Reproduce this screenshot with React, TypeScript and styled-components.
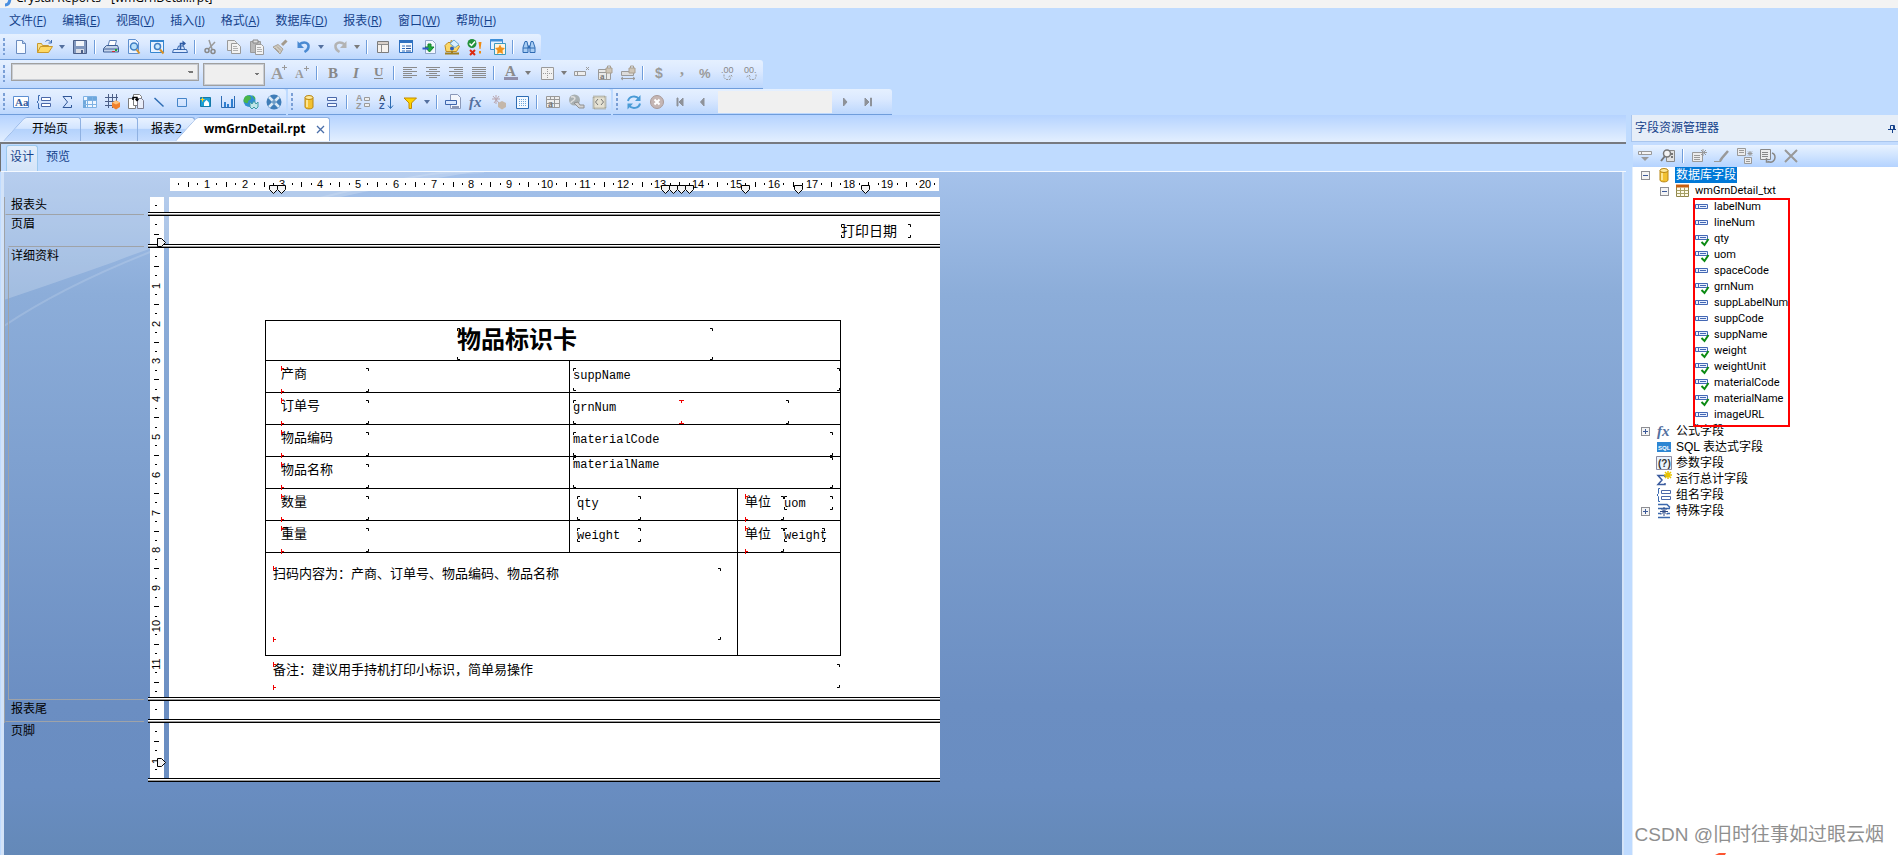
import React from 'react';
import styled, { createGlobalStyle, css } from 'styled-components';

const UI = '"Open Sans", "Noto Sans CJK SC", sans-serif';
const SONG = '"Liberation Sans", "Noto Sans CJK SC", sans-serif';
const MONO = '"Liberation Mono", "Noto Sans CJK SC", monospace';

const Global = createGlobalStyle`
  * { box-sizing: border-box; }
  body { margin: 0; background: #bfdbff; font: 12px/16px ${UI}; color: #000; overflow: hidden; }
  button { border: 0; padding: 0; background: none; font: inherit; color: inherit; }
  ul { list-style: none; margin: 0; padding: 0; }
  svg { display: block; overflow: visible; }
`;

/* ---------- icons ---------- */

const B = '#3b6ab0';
const G = '#9a9a9a';

const lines = (rows: number[][], color: string) =>
  rows.map(([x, y, w], i) => <path key={i} d={`M${x} ${y}.5h${w}`} stroke={color} />);

const icons: Record<string, React.ReactNode> = {
  new: (<><path d="M3.5 1.5h6l3 3v10h-9z" fill="#f6faff" stroke="#6b8cc0" /><path d="M9.5 1.5v3h3" fill="#bcd2f0" stroke="#6b8cc0" /></>),
  open: (<><path d="M0.5 13.5v-9h4l1 2h6v2" fill="#f9e08a" stroke="#c9992c" /><path d="M0.5 13.5l3-6h12l-4 6z" fill="#ffd964" stroke="#c9992c" /><path d="M8.5 2.500c2-2 4-1.500 5.500 1M14.500 1v3h-3" fill="none" stroke={B} /></>),
  save: (<><path d="M1.500 1.500h13v13h-13z" fill="#8198bf" stroke="#4b5f88" /><path d="M4 2h8v5H4z" fill="#f2f5fa" /><path d="M4 10h8v4H4z" fill="#d9dde6" /><path d="M9 11h2v3H9z" fill="#4b5f88" /></>),
  print: (<><path d="M5 7l1.500-5.500h7L12 7z" fill="#fff" stroke="#5d7fb5" /><path d="M.5 9.500l3-3h11l1 2.500v4h-15z" fill="#c3d3ea" stroke="#3f5f95" /><path d="M1 10h14" stroke="#3f5f95" /><path d="M12 10h2v2h-2z" fill="#1faa2c" /><path d="M9 12.500h3" stroke="#d03030" /></>),
  preview: (<><path d="M2.500.500h7l3 3v11h-10z" fill="#eaf3ff" stroke="#5f90cf" /><circle cx="8" cy="7.500" r="3.500" fill="#b8e0fb" stroke="#3f7fc4" strokeWidth="1.500" /><path d="M10.500 10.500l3 4" stroke="#d7922a" strokeWidth="2" /></>),
  previewWin: (<><path d="M1.500 1.500h13v12h-13z" fill="#eaf3ff" stroke="#3586d0" /><path d="M1 2h14" stroke="#3586d0" strokeWidth="2" /><circle cx="8.500" cy="7.500" r="3" fill="#c9e8fd" stroke="#3f7fc4" strokeWidth="1.500" /><path d="M11 10.500l3.500 4" stroke="#d7922a" strokeWidth="2" /></>),
  export: (<><path d="M1.500 10.500h13l1 3h-15z" fill="#dceaff" stroke={B} /><path d="M8.500 11V4.500h4" fill="none" stroke="#2f5ca5" strokeWidth="1.500" /><path d="M10.500 1.500l3.500 3-3.500 3z" fill="#2f5ca5" /><path d="M5.500 10l1-3h5l1 3" fill="none" stroke={B} /></>),
  cut: (<><path d="M6 1l3 9M12 3L5.500 10" stroke={G} strokeWidth="1.500" /><circle cx="4" cy="11.500" r="2" fill="none" stroke="#888" strokeWidth="1.500" /><circle cx="10" cy="12.500" r="2" fill="none" stroke="#888" strokeWidth="1.500" /></>),
  copy: (<><path d="M1.500 1.500h7l2 2v8h-9z" fill="#ececec" stroke={G} /><path d="M5.500 4.500h6l3 3v7h-9z" fill="#f3f3f3" stroke={G} />{lines([[7, 7, 4], [7, 9, 5], [7, 11, 5]], '#b0b0b0')}</>),
  paste: (<><path d="M1.500 2.500h10v11h-10z" fill="#b9b9b9" stroke={G} /><path d="M4 1h5v3H4z" fill="#ddd" stroke="#888" /><path d="M6.500 5.500h6l2 2v8h-8z" fill="#f3f3f3" stroke={G} />{lines([[8, 8, 4], [8, 10, 5], [8, 12, 5]], '#b0b0b0')}</>),
  brush: (<><path d="M14.500 1.500L10 6" stroke="#a49a8c" strokeWidth="3" /><path d="M6 5.500l5 4.500-3 5-7-7z" fill="#cfcac0" stroke="#a9a297" /><path d="M3 9l4 4M5 7.500l4 4" stroke="#a9a297" /></>),
  undo: (<><path d="M3 5.500c6-4 10-1 9.500 2.500-.3 2.300-2 3.800-4 5" fill="none" stroke="#4a8ad2" strokeWidth="2.500" /><path d="M1.500 2v7H8z" fill="#4a8ad2" /></>),
  redo: (<><path d="M13 5.500C7 1.500 3 4.500 3.500 8c.3 2.300 2 3.800 4 5" fill="none" stroke="#b3b3b3" strokeWidth="2.500" /><path d="M14.500 2v7H8z" fill="#b3b3b3" /></>),
  sheet: (<><path d="M2.500 2.500h11v11h-11z" fill="#f6f2ee" stroke="#7c7c7c" /><path d="M2.500 5.500h11M6.500 5.500v8" stroke="#8c8c8c" /><path d="M3 3h10v2H3z" fill="#d8cfc8" /></>),
  form: (<><path d="M1.500 1.500h13v12h-13z" fill="#f4f9ff" stroke="#2e70c0" /><path d="M1 2.500h14" stroke="#2e70c0" strokeWidth="3" /><path d="M4 7h3M4 9.500h3M4 12h3" stroke="#2e70c0" /><path d="M8 7h5M8 9.500h5M8 12h5" stroke="#244f94" /></>),
  publish: (<><path d="M4.500 1.500h7l3 3v10h-10z" fill="#f2f7ff" stroke="#8fa5c8" /><path d="M7 5h3v3h3l-4.500 5L4 8h3z" fill="#1fae3c" stroke="#15802b" /><path d="M1.500 9.500h6" stroke="#3359c7" strokeWidth="2" /></>),
  explorer: (<><path d="M1 6.500l3-3h3v-2l6 3 2.500 3-3 5H2z" fill="#fbd768" stroke="#bd8a22" /><path d="M6 4.500l4-3.500 5 4.500-4 3z" fill="#d9effe" stroke="#69a8d6" /><circle cx="8" cy="9.500" r="2" fill="#2b5fb8" /><path d="M1 14.500h14M8 12v3" stroke="#a08020" strokeWidth="2" /></>),
  check: (<><circle cx="5" cy="4.500" r="4.500" fill="#23913a" /><path d="M2.500 4.500l2 2 3.500-4" fill="none" stroke="#fff" strokeWidth="1.500" /><path d="M3 11l5 5M8 11l-5 5" stroke="#dc2a10" strokeWidth="2" /><path d="M11.500 3h3l-1 7h-1zM12 12h2v2.500h-2z" fill="#f08b12" /></>),
  star: (<><path d="M.5.500h12v10H.5z" fill="#e6f2ff" stroke="#3f8fd8" /><path d="M0 1.500h13" stroke="#3f8fd8" strokeWidth="2" /><path d="M4.500 4.500h11v11h-11z" fill="#fff4df" stroke="#3d9ac0" /><path d="M10 5.500l1.500 3 3.500.5-2.500 2.500.5 3.500-3-1.500L7 15l.5-3.500L5 9l3.500-.5z" fill="#f0921a" /></>),
  find: (<><path d="M2 13.500v-5l2-6h2l1 5v6zM9 13.500v-6l1-5h2l2 6v5z" fill="#a9cdf3" stroke="#2f6bb3" /><path d="M7 6.500h2v3H7z" fill="#2f6bb3" /><path d="M2 9h5M9 9h5" stroke="#2f6bb3" /></>),
  grow: (<><text x="0" y="14" fontFamily="Liberation Serif" fontWeight="700" fontSize="17" fill={G}>A</text><path d="M13.500 0v5M11 2.500h5" stroke={G} /></>),
  shrink: (<><text x="1" y="13" fontFamily="Liberation Serif" fontWeight="700" fontSize="12" fill={G}>A</text><path d="M12.500 1v5M10 3.500h5" stroke={G} /></>),
  bold: <text x="3" y="13" fontFamily="Liberation Serif" fontWeight="700" fontSize="15" fill="#888">B</text>,
  italic: <text x="5" y="13" fontFamily="Liberation Serif" fontWeight="700" fontStyle="italic" fontSize="15" fill="#888">I</text>,
  underline: (<><text x="3" y="11" fontFamily="Liberation Serif" fontWeight="700" fontSize="13" fill="#888">U</text><path d="M3 13.500h9" stroke="#888" /></>),
  left: lines([[1, 2, 14], [1, 4, 9], [1, 6, 14], [1, 8, 9], [1, 10, 14], [1, 12, 9]], '#8b8b8b'),
  center: lines([[1, 2, 14], [4, 4, 8], [1, 6, 14], [4, 8, 8], [1, 10, 14], [4, 12, 8]], '#8b8b8b'),
  right: lines([[1, 2, 14], [6, 4, 9], [1, 6, 14], [6, 8, 9], [1, 10, 14], [6, 12, 9]], '#8b8b8b'),
  justify: lines([[1, 2, 14], [1, 4, 14], [1, 6, 14], [1, 8, 14], [1, 10, 14], [1, 12, 14]], '#8b8b8b'),
  color: (<><text x="2" y="11" fontFamily="Liberation Serif" fontWeight="700" fontSize="15" fill="#8b8b8b">A</text><path d="M1 13.500h14" stroke="#9090ac" strokeWidth="3" /></>),
  border: (<><path d="M2.500 2.500h12v12h-12z" fill="#f1f1f1" stroke={G} /><path d="M8.500 4v10M4 8.500h10" stroke={G} strokeDasharray="1 1" /></>),
  suppress: (<><path d="M.5 6.500h11v4H.5zM3.500 6.500v4" fill="#ededed" stroke={G} /><path d="M12 2l3 3M15 2l-3 3" stroke={G} /></>),
  lockTable: (<><path d="M1.500 4.500h12v10h-12zM1.500 7.500h12M9.500 7v7" fill="#e8e8e8" stroke={G} /><text x="3" y="14" fontFamily="Liberation Serif" fontWeight="700" fontSize="9" fill="#777">a</text><path d="M9 3h6v5H9z" fill="#cfc6b8" stroke="#a99f90" /><path d="M10.500 3V1h3v2" fill="none" stroke="#a99f90" /></>),
  lockSize: (<><path d="M1.500 6.500h12v4h-12z" fill="#dcdcdc" stroke={G} /><path d="M1 13.500h14M3 12l-2 1.500L3 15M13 12l2 1.500-2 1.500" fill="none" stroke={G} /><path d="M9 3h6v5H9z" fill="#cfc6b8" stroke="#a99f90" /><path d="M10.500 3V1h3v2" fill="none" stroke="#a99f90" /></>),
  dollar: <text x="4" y="13" fontFamily="Liberation Sans" fontWeight="700" fontSize="14" fill={G}>$</text>,
  comma: <text x="6" y="10" fontFamily="Liberation Serif" fontWeight="700" fontSize="16" fill={G}>,</text>,
  percent: <text x="2" y="13" fontFamily="Liberation Sans" fontWeight="700" fontSize="13" fill={G}>%</text>,
  decAdd: (<><text x="1" y="8" fontFamily="Liberation Sans" fontSize="9" fill="#888">.00</text><path d="M4 9.500v3l2 2h4l1-3M8.500 12l2.500-2 2 2" fill="none" stroke={G} strokeDasharray="2 1" /></>),
  decSub: (<><text x="1" y="8" fontFamily="Liberation Sans" fontSize="9" fill="#888">00.</text><path d="M13 9.500v3l-2 2H7l-1-3M3.500 12l2.500-2 2 2" fill="none" stroke={G} strokeDasharray="2 1" /></>),
  text: (<><path d="M.5 2.500h15v11H.5z" fill="#fff" stroke="#5d8fd2" /><text x="2" y="12" fontFamily="Liberation Serif" fontWeight="700" fontSize="11" fill="#345b9c">Aa</text></>),
  group: (<><path d="M4 1.500H2.500v5L1 8l1.500 1.500v5H4" fill="none" stroke={B} /><path d="M5.500 3.500h9v3h-9zM5.500 9.500h9v3h-9z" fill="#fff" stroke="#4b68a8" /></>),
  sigma: <path d="M12.500 5V2.500H4l4.500 5.500L4 13.500h8.500V11" fill="none" stroke="#2f5596" />,
  cross: (<><path d="M1.500 2.500h13v11h-13z" fill="#eef6ff" stroke="#7fb2e4" /><path d="M5 3h10v3H5zM1 6h3v8H1z" fill="#6fa8dc" /><path d="M1.500 6.500h13M1.500 10.500h13M5.500 2.500v11M10.500 2.500v11" stroke="#7fb2e4" /></>),
  cube: (<><path d="M0 3.500h13M0 7.500h13M0 11.500h7M3.500 0v14M7.500 0v14M11.500 0v7" stroke="#4b5e86" /><path d="M11 6.500l4 2v4.500l-4 2.500-4-2.500V8.500z" fill="#f0802a" /><path d="M11 6.500l4 2-4 2-4-2z" fill="#ffc37a" /></>),
  subreport: (<><path d="M.5 4.500h7v10h-7z" fill="#fff" stroke="#7d7d7d" /><path d="M5.500.500h6l2 2v9h-8z" fill="#fff" stroke="#7d7d7d" /><path d="M9.500 4.500h4l2 2v8h-6z" fill="#e9eef9" stroke="#7c7c8e" /><path d="M5 6V3.500h4V6M7.500 5L9 6.500 10.500 5" fill="none" stroke="#000" strokeWidth="1.500" /></>),
  line: <path d="M3.500 4l9 8.500" stroke="#2d6cb3" strokeWidth="1.500" />,
  rect: <path d="M3.500 4.500h9v8h-9z" fill="none" stroke="#4585c9" />,
  picture: (<><path d="M3.500 3.500h10v9h-10z" fill="#1b9fd5" stroke="#1479a8" /><path d="M7 12V8.500L9.500 6 12 8.500V12z" fill="#fff" /><path d="M5.500 3.500v4M3.500 5.500h4" stroke="#ffd62b" /></>),
  chart: (<><path d="M1.500 2v11.500h13.500M14.500 2v12" fill="none" stroke="#2d6cb3" /><path d="M4 8h2v5H4zM7 10h2v3H7zM11 5h2v8h-2z" fill="#2f7fd0" /></>),
  map: (<><circle cx="6.500" cy="7" r="6" fill="#2f8ed0" /><path d="M3 2c3-1 5 0 5 2s-3 2-3 4-3 1-4 0 0-5 2-6zM9 1c3 1 4 3 3 5" fill="#49b648" /><path d="M7 8l2 2 2-3 2 3 2-2v5l-2 2-2-2-2 2-2-2z" fill="#bfe6e8" stroke="#3e9ca6" /></>),
  flash: (<><circle cx="8" cy="8" r="7.500" fill="#3f7db8" /><path d="M3 3l10 10M13 3L3 13" stroke="#dbe9f5" strokeWidth="2.500" /><circle cx="8" cy="8" r="2" fill="#6a9ac6" /></>),
  database: (<><path d="M4 3.500v9.500c0 2.500 8 2.500 8 0V3.500z" fill="#f2c132" stroke="#b98612" /><ellipse cx="8" cy="3.500" rx="4" ry="2" fill="#ffe99a" stroke="#b98612" /><path d="M6 6v7" stroke="#fff0b5" strokeWidth="1.500" /></>),
  groupExpert: <path d="M3.500 3.500h9v3h-9zM3.500 9.500h9v3h-9z" fill="#f3f8ff" stroke="#4b68a8" />,
  sortGroup: (<><text x="1" y="7" fontFamily="Liberation Sans" fontWeight="700" fontSize="9" fill="#999">A</text><text x="1" y="15" fontFamily="Liberation Sans" fontWeight="700" fontSize="9" fill="#999">Z</text><path d="M9.500 3.500h5v3h-5zM9.500 9.500h5v3h-5z" fill="#eee" stroke={G} /></>),
  sort: (<><text x="1" y="7" fontFamily="Liberation Sans" fontWeight="700" fontSize="9" fill="#444">A</text><text x="1" y="15" fontFamily="Liberation Sans" fontWeight="700" fontSize="9" fill="#345b9c">Z</text><path d="M12.500 2v12M10 11.500l2.500 3 2.500-3" fill="none" stroke="#2d6cb3" /></>),
  filter: <path d="M2 4h12.500l-5 5v5.500H7V9z" fill="#ffd400" stroke="#c28a00" />,
  section: (<><path d="M5.500.500h7l3 3v11h-10z" fill="#f3f6fc" stroke="#8a98b8" /><path d="M.5 6.500h11v4H.5z" fill="#d6e6ff" stroke="#3f66ac" /><path d="M7 13h7" stroke="#8a98b8" strokeWidth="2" /></>),
  fx: <text x="1" y="13" fontFamily="Liberation Serif" fontStyle="italic" fontWeight="700" fontSize="15" fill="#54709f">fx</text>,
  highlight: (<><path d="M5 1v9M1 5h8M2 2l6 7M8 2L3 9" stroke="#b9a5ae" /><path d="M11 7l4 2v4l-4 2.500L7 13V9z" fill="#c4b7aa" /></>),
  template: (<><path d="M2.500 2.500h12v12h-12z" fill="#f4f9ff" stroke="#2d6cb3" /><path d="M5 5.500h8M5 7.500h8M5 9.500h8M5 11.500h8" stroke="#6fa8dc" strokeDasharray="1 1" /></>),
  olap: (<><path d="M1.500 2.500h13v11h-13zM1.500 5.500h13M1.500 9.500h13M9.500 2.500v11M5.500 2.500v3" fill="#eee" stroke="#999" /><text x="3" y="13" fontFamily="Liberation Serif" fontWeight="700" fontSize="10" fill="#777">a</text></>),
  link: (<><circle cx="6.500" cy="6" r="5.500" fill="#a9b0b2" /><path d="M3 3c3-1 5 1 3 3s-3 1-3 3" fill="none" stroke="#ddd" strokeWidth="1.500" /><path d="M6 9l4-1 2 3h4v3h-5z" fill="#d3d3d3" stroke="#909090" /></>),
  xml: (<><path d="M2.500 2.500h12v12h-12z" fill="#e4e1d2" stroke="#99957f" strokeWidth="2" strokeDasharray="1 1" /><path d="M7 5L4.500 8 7 11M10 5l2.500 3L10 11" fill="none" stroke="#777" /></>),
  refresh: (<><path d="M2 7c1-5 8-6 11-2M14 9.500c-1 5-8 6-11 2" fill="none" stroke="#4a9bd6" strokeWidth="2" /><path d="M14.500 1v6H9zM1.500 15.500v-6H7z" fill="#4a9bd6" /></>),
  stop: (<><circle cx="8" cy="8" r="6.500" fill="#c5b6b4" stroke="#a99a99" /><path d="M5.500 5.500l5 5M10.500 5.500l-5 5" stroke="#fff" strokeWidth="2" /></>),
  first: <path d="M5 4v8h1V4zM11 4v8L7 8z" fill="#8e9299" stroke="#8e9299" />,
  prev: <path d="M9 4v8L5.500 8z" fill="#8e9299" stroke="#8e9299" />,
  next: <path d="M5.500 4v8L9 8z" fill="#8e9299" stroke="#8e9299" />,
  last: <path d="M4 4v8l4-4zM9.500 4v8h1V4z" fill="#8e9299" stroke="#8e9299" />,
  insertField: (<><path d="M1.500 3.500h13v3h-13zM4.500 3.500v3" fill="#f4f4f4" stroke="#999" /><path d="M4 9h8l-4 4z" fill="#999" /></>),
  browse: (<><path d="M6.500 2.500h8v11h-8z" fill="#e2e2e2" stroke="#888" /><circle cx="7" cy="5.500" r="3.500" fill="#f4f4f4" stroke="#777" strokeWidth="1.500" /><path d="M5 8l-4 5M11 6h2M11 9h2" stroke="#777" strokeWidth="2" /></>),
  newField: (<><path d="M1.500 4.500h10v9h-10z" fill="#ececec" stroke="#999" />{lines([[3, 7, 6], [3, 9, 6], [3, 11, 6]], '#999')}<path d="M12 1v7M9 4.500h7M10 2l5 5M15 2l-5 5" stroke="#999" /></>),
  edit: (<><path d="M14 3l-6 7-2 3" fill="none" stroke="#999" strokeWidth="2.500" /><path d="M0 13.500h7" stroke="#999" /></>),
  duplicate: (<><path d="M.5.500h8v7h-8zM7.500 9.500h7v6h-7z" fill="#ececec" stroke="#999" />{lines([[2, 2, 5], [2, 4, 5], [9, 11, 4], [9, 13, 4]], '#999')}<path d="M13 3v5M10.500 5.500h5M11 3.500l4 4M15 3.500l-4 4" stroke="#999" /></>),
  history: (<><path d="M.5 1.500h10v10H.5z" fill="#ececec" stroke="#888" />{lines([[2, 4, 6], [2, 6, 6], [2, 8, 6]], '#888')}<path d="M6.500 10v4h4M8 13.500c4 2 7-1 7-4 0-2-1-4-3-4.500" fill="none" stroke="#888" strokeWidth="1.500" /></>),
  remove: <path d="M2 2l12 12M14 2L2 14" stroke="#999" strokeWidth="2" />,
  tableIcon: (<><path d="M1.500 2.500h12v11h-12z" fill="#fffbe9" stroke="#8f8449" /><path d="M1 3h13" stroke="#c65f12" strokeWidth="3" /><path d="M1.500 7.500h12M1.500 10.500h12M5.500 4.500v9M9.500 4.500v9" stroke="#a5a066" /></>),
  sql: (<><path d="M1 3h14v10H1z" fill="#2d86d3" /><text x="2" y="11" fontFamily="Liberation Sans" fontWeight="700" fontSize="6" fill="#fff">SQL</text></>),
  param: (<><path d="M.5 1.500h15v13H.5z" fill="#eaf3ff" stroke="#8a8aa0" /><text x="2" y="12" fontFamily="Liberation Sans" fontWeight="700" fontSize="10" fill="#333">(?)</text></>),
  running: (<><path d="M9 6V4.500H2l4 4.500-4 4.500h7V12" fill="none" stroke="#3b5b9e" strokeWidth="1.500" /><path d="M12 0v8M8 4h8M9 1l6 6M15 1L9 7" stroke="#e8c300" strokeWidth="1.500" /></>),
  special: (<><path d="M2 1.500h9l3 3M2 14.500h12M2 5.500h12M2 10.500h3M11 10.500h3" fill="none" stroke="#3b68ad" strokeWidth="1.500" /><path d="M8 4v9M4 8.500h8M5 5.500l6 6M11 5.500l-6 6" stroke="#2e4b86" /></>),
  field: (<><path d="M1.500 5.500h12v4h-12z" fill="#eaf1ff" stroke="#4468b4" /><path d="M4.500 5.500v4M6 7.500h6" stroke="#4468b4" /></>),
  fieldUsed: (<><path d="M1.500 4.500h12v4h-12z" fill="#eaf1ff" stroke="#4468b4" /><path d="M4.500 4.500v4M6 6.500h6" stroke="#4468b4" /><path d="M7.500 11l3 3 4-6" fill="none" stroke="#0b8a12" strokeWidth="2" /></>),
};

const Icon = ({ name }: { name: string }) => (
  <svg width="16" height="16" viewBox="0 0 16 16" aria-hidden="true">{icons[name]}</svg>
);

/* ---------- window frame ---------- */

const Shell = styled.div`
  display: flex;
  flex-direction: column;
  height: 100vh;
  position: relative;
`;

const TitleBar = styled.header`
  display: flex;
  align-items: flex-end;
  gap: 4px;
  flex: none;
  height: 8px;
  padding: 0 4px 2px;
  overflow: hidden;
  background: #f3f3f3;
`;

const MenuBar = styled.nav`
  display: flex;
  flex: none;
  align-items: center;
  height: 26px;
  padding-left: 9px;
  gap: 16px;
  color: #15428b;
`;

const Band = styled.div<{ $tall?: boolean; $end?: number }>`
  display: flex;
  align-items: center;
  height: ${(p) => (p.$tall ? 29 : 26)}px;
  padding: 0 ${(p) => p.$end ?? 1}px ${(p) => (p.$tall ? 2 : 0)}px 0;
  background: linear-gradient(#e5f0ff, #dbe9ff 40%, #bcd7fd);
  border-bottom: 1px solid #6f9ddb;
  border-radius: 0 3px 0 0;
`;

const BandRow = styled.div`
  display: flex;
  flex: none;
  gap: 2px;
`;

const Grip = styled.span`
  flex: none;
  width: 9px;
  height: 17px;
  padding: 0 4px 0 3px;
  background: linear-gradient(#7a9fd6 3px, transparent 3px) 0 0 / 2px 5px repeat-y;
  background-origin: content-box;
  background-clip: content-box;
`;

const Divider = styled.span`
  flex: none;
  width: 8px;
  height: 14px;
  padding: 0 3px;
  background: linear-gradient(90deg, #6f9ddb 1px, #fff 1px) content-box;
`;

const ToolButton = styled.button`
  display: grid;
  flex: none;
  place-items: center;
  width: 23px;
  height: 22px;
`;

const SplitButton = styled.button<{ $dim?: boolean }>`
  display: flex;
  flex: none;
  align-items: center;
  gap: 6px;
  width: 36px;
  height: 22px;
  padding-left: 5px;
  &::after {
    content: '';
    border: solid transparent;
    border-width: 4px 3px 0;
    border-top-color: ${(p) => (p.$dim ? '#7b7b7b' : '#54709f')};
  }
`;

const Combo = styled.select<{ $width: number; $height: number }>`
  align-self: flex-start;
  flex: none;
  width: ${(p) => p.$width}px;
  height: ${(p) => p.$height}px;
  margin: 3px 2px 0 2px;
  appearance: none;
  border: 1px solid #a0a0a0;
  outline: 1px solid #c9cdd3;
  outline-offset: -2px;
  background:
    linear-gradient(to bottom right, #777 50%, transparent 50%) right 4px center / 3px 3px no-repeat,
    linear-gradient(to bottom left, #777 50%, transparent 50%) right 7px center / 3px 3px no-repeat,
    #efefef;
`;

const PageBox = styled.input`
  width: 114px;
  height: 22px;
  margin: 0 2px 0 4px;
  border: 0;
  background: #f0f0f0;
`;

const Tools = ({ items }: { items: string[] }) => (
  <>
    {items.map((item, i) => {
      if (item === '|') return <Divider key={i} />;
      if (item.endsWith('+')) {
        const name = item.slice(0, -1);
        return (
          <SplitButton key={i} type="button" aria-label={name} $dim={name === 'redo' || name === 'color' || name === 'border'}>
            <Icon name={name} />
          </SplitButton>
        );
      }
      return <ToolButton key={i} type="button" aria-label={item}><Icon name={item} /></ToolButton>;
    })}
  </>
);

/* ---------- document area ---------- */

const Main = styled.main`
  display: flex;
  flex: 1;
  min-height: 0;
`;

const DocArea = styled.section`
  display: flex;
  flex: 1;
  flex-direction: column;
  min-width: 0;
`;

const TabStrip = styled.div`
  display: flex;
  flex: none;
  align-items: flex-end;
  height: 29px;
  padding: 0 0 1px 3px;
  background: linear-gradient(#b5d3ff, #e3efff);
  border-bottom: 2px solid #777a80;
`;

const Tab = styled.button<{ $slant?: boolean; $active?: boolean; $width: number }>`
  position: relative;
  flex: none;
  width: ${(p) => p.$width}px;
  height: 24px;
  text-align: left;
  z-index: ${(p) => (p.$active ? 2 : 1)};
  padding-left: ${(p) => (p.$slant ? 29 : 13)}px;
  font-weight: ${(p) => (p.$active ? 700 : 400)};
  margin-left: ${(p) => (p.$active ? -20 : 0)}px;

  &::before, &::after {
    content: '';
    position: absolute;
    z-index: -1;
    inset: 0 0 0 ${(p) => (p.$slant ? 24 : 0)}px;
    border: solid #8fb1e2;
    border-width: 1px 1px 0 0;
    border-radius: 0 3px 0 0;
    background: ${(p) => (p.$active ? '#fff' : 'linear-gradient(#e9f2ff, #d3e5ff 45%, #b4d2fc 50%, #c6ddff)')};
  }
  ${(p) =>
    p.$slant &&
    css`
      &::before {
        left: 0;
        right: auto;
        width: 30px;
        border-width: 1px 0 0 1px;
        border-radius: 3px 0 0 0;
        transform: skewX(-42deg);
        transform-origin: left bottom;
      }
    `}
`;

const TabInner = styled.span`
  display: flex;
  align-items: center;
  gap: 11px;
  height: 24px;
`;

const ViewTabs = styled.div`
  display: flex;
  flex: none;
  align-items: flex-start;
  height: 28px;
  padding: 1px 0 0 5px;
  border-left: 1px solid #6f6f6f;
  border-bottom: 1px solid #f4f9ff;
  background: #bfdbff;
`;

const ViewTab = styled.button<{ $active?: boolean }>`
  width: 32px;
  height: 26px;
  margin-right: 4px;
  padding-bottom: 4px;
  color: #15428b;
  border: 1px solid transparent;
  border-bottom: 0;
  ${(p) =>
    p.$active &&
    css`
      border-color: #9cc9ee;
      border-radius: 3px 3px 0 0;
      background: linear-gradient(#e4eefb, #d4e4f8);
    `}
`;

const Canvas = styled.div`
  position: relative;
  flex: 1;
  min-height: 0;
  overflow: hidden;
  padding-top: 6px;
  border: solid #d3e3f8;
  border-width: 0 2px 0 3px;
  margin: 0 2px 0 1px;
  background: linear-gradient(#a5c2eb 0, #8cadd9 18%, #7fa1d0 42%, #6b8ec2 78%, #698dc1 90%, #6489b8 100%);
  font-family: ${SONG};
`;

const Glow = styled.svg`
  position: absolute;
  left: 0;
  top: 0;
`;

const HRuler = styled.div`
  position: relative;
  width: 769px;
  height: 13px;
  margin: 0 0 6px 166px;
  background: #fff;
`;

const Sections = styled.div`
  position: relative;
  display: grid;
  grid-template-columns: 144px 16px 5px 771px;
`;

const BandLabel = styled.div<{ $outer: boolean; $inset?: boolean; $boxed?: boolean; $line: boolean }>`
  display: flex;
  margin-right: 4px;
  border-left: 1px solid ${(p) => (p.$outer ? '#9fa3a8' : 'transparent')};
  padding: 0 0 1px ${(p) => (p.$inset ? 3 : 0)}px;
  & > span {
    flex: 1;
    padding-left: ${(p) => (p.$inset ? 2 : 5)}px;
    border-left: 1px solid ${(p) => (p.$boxed ? '#9fa3a8' : 'transparent')};
    border-bottom: 1px solid ${(p) => (p.$line ? '#9fa3a8' : 'transparent')};
  }
`;

const VRuler = styled.div`
  position: relative;
  width: 14px;
  margin-left: 2px;
  background: #fff;
`;

const RuleLine = styled.div`
  grid-column: 2 / -1;
  height: 4px;
  border: solid #000;
  border-width: 1px 0;
  background: linear-gradient(#fff 50%, #9a9a9a 50%);
`;

const BandBody = styled.div<{ $height: number }>`
  grid-column: 4;
  height: ${(p) => p.$height}px;
  background: #fff;
`;

const CM = 378;
const at = (quarter: number) => Math.round((quarter * CM) / 40);

const range = (n: number) => Array.from({ length: n }, (_, i) => i + 1);

const Stop = ({ x, y, turn }: { x: number; y: number; turn?: boolean }) => (
  <path
    d={turn ? `M${x}.5 ${y}.5h4l4 4l-4 4h-4z` : `M${x}.5 ${y}.5h8v4l-4 4l-4-4z`}
    fill="#f4f4f4"
    stroke="#000"
  />
);

const HScale = () => (
  <svg width="769" height="13" aria-hidden="true" fontFamily="Liberation Sans" fontSize="11" textAnchor="middle">
    {range(81).map((q) => {
      const x = at(q) - 1;
      if (q % 4 === 0) return <text key={q} x={x} y="10">{q / 4}</text>;
      return q % 2 === 0
        ? <path key={q} d={`M${x}.5 4v5`} stroke="#000" />
        : <path key={q} d={`M${x}.5 5v2`} stroke="#000" />;
    })}
    {[99, 107, 491, 499, 507, 515, 571, 624, 691].map((x) => <Stop key={x} x={x} y={7} />)}
  </svg>
);

const VScale = ({ height, stop }: { height: number; stop?: number }) => (
  <svg width="14" height={height} aria-hidden="true" fontFamily="Liberation Sans" fontSize="11" textAnchor="middle">
    {range(60).filter((q) => at(q) < height - 2).map((q) => {
      const y = at(q);
      if (q % 4 === 0) return <text key={q} transform={`translate(10 ${y}) rotate(-90)`}>{q / 4}</text>;
      return q % 2 === 0
        ? <path key={q} d={`M4 ${y - 1}.5h5`} stroke="#000" />
        : <path key={q} d={`M5 ${y - 1}.5h2`} stroke="#000" />;
    })}
    {stop !== undefined && <Stop x={7} y={stop} turn />}
  </svg>
);

/* ---------- report objects ---------- */

const FrameBox = styled.div<{ $w: number; $h: number; $x?: number; $y?: number }>`
  position: relative;
  flex: none;
  width: ${(p) => p.$w}px;
  height: ${(p) => p.$h}px;
  margin: ${(p) => p.$y ?? 0}px 0 0 ${(p) => p.$x ?? 0}px;
  white-space: nowrap;
`;

const Corners = styled.svg`
  position: absolute;
  left: 0;
  top: 0;
`;

const Caption = styled.span`
  display: block;
  font: 13px/11px ${SONG};
`;
const DataName = styled.span`
  display: block;
  font: 12px/16px ${MONO};
`;
const CardTitle = styled.span`
  display: block;
  font: 700 24px/24px ${SONG};
`;
const DateLabel = styled.span`
  display: block;
  font: 14px/14px ${SONG};
`;

interface FrameProps {
  w: number; h: number; x?: number; y?: number; snap?: boolean; mid?: boolean; children?: React.ReactNode;
}

const Frame = ({ w, h, x, y, snap, mid, children }: FrameProps) => (
  <FrameBox $w={w} $h={h} $x={x} $y={y}>
    <Corners width={w} height={h} fill="none" stroke="#000" aria-hidden="true">
      {!snap && <path d={`M.5 3V.5H3M.5 ${h - 3}v2.500H3`} />}
      <path d={`M${w - 3} .5h2.500V3M${w - 3} ${h - 1}.5h2.500V${h - 3}`} />
      {snap && <path d={`M.5-2v5M0 .5h3M.5 ${h - 3}v5M0 ${h - 1}.5h3`} stroke="#f00000" />}
      {mid && <path d={`M${w / 2 - 2} .5h5M${w / 2}.5 0v3M${w / 2 - 2} ${h - 1}.5h5M${w / 2}.5 ${h - 3}v3`} stroke="#f00000" />}
    </Corners>
    {children}
  </FrameBox>
);

const DetailBody = styled.div`
  padding: 72px 0 0 96px;
`;

const Card = styled.table`
  width: 576px;
  table-layout: fixed;
  border-spacing: 0;
  border: solid #000;
  border-width: 1px 0 0 1px;
  td, th {
    padding: 0;
    height: 32px;
    vertical-align: top;
    text-align: left;
    font-weight: 400;
    border: solid #000;
    border-width: 0 1px 1px 0;
  }
`;

const LabelCol = styled.col` width: 304px; `;
const ValueCol = styled.col` width: 168px; `;
const UnitCol = styled.col` width: 103px; `;

const CardHead = styled.tr` && th { height: 40px; } `;
const ScanRow = styled.tr` && td { height: 103px; } `;
const Pair = styled.div` display: flex; `;

const Heading = ({ children }: { children: string }) => (
  <th scope="row"><Frame w={88} h={24} x={15} y={7} snap><Caption>{children}</Caption></Frame></th>
);

const Unit = ({ name, w }: { name: string; w: number }) => (
  <td>
    <Pair>
      <Frame w={39} h={24} x={7} y={7} snap><Caption>单位</Caption></Frame>
      <Frame w={w} h={14} y={7}><DataName>{name}</DataName></Frame>
    </Pair>
  </td>
);

const LabelCard = () => (
  <Card>
    <colgroup><LabelCol /><ValueCol /><UnitCol /></colgroup>
    <tbody>
      <CardHead><th colSpan={3}><Frame w={256} h={32} x={191} y={7}><CardTitle>物品标识卡</CardTitle></Frame></th></CardHead>
      <tr><Heading>产商</Heading><td colSpan={2}><Frame w={267} h={23} x={3} y={7}><DataName>suppName</DataName></Frame></td></tr>
      <tr><Heading>订单号</Heading><td colSpan={2}><Frame w={216} h={24} x={3} y={7} mid><DataName>grnNum</DataName></Frame></td></tr>
      <tr><Heading>物品编码</Heading><td colSpan={2}><Frame w={260} h={24} x={3} y={7}><DataName>materialCode</DataName></Frame></td></tr>
      <tr><Heading>物品名称</Heading><td colSpan={2}><Frame w={260} h={31} x={3}><DataName>materialName</DataName></Frame></td></tr>
      <tr><Heading>数量</Heading><td><Frame w={64} h={24} x={7} y={7}><DataName>qty</DataName></Frame></td><Unit name="uom" w={49} /></tr>
      <tr><Heading>重量</Heading><td><Frame w={64} h={14} x={7} y={7}><DataName>weight</DataName></Frame></td><Unit name="weight" w={41} /></tr>
      <ScanRow>
        <td colSpan={2}><Frame w={448} h={72} x={7} y={15} snap><Caption>扫码内容为：产商、订单号、物品编码、物品名称</Caption></Frame></td>
        <td />
      </ScanRow>
    </tbody>
  </Card>
);

const DateRow = styled.div`
  display: flex;
  justify-content: flex-end;
  padding-right: 29px;
`;

interface BandProps {
  label: string; height: number; outer?: boolean; inset?: boolean; boxed?: boolean; line?: boolean; stop?: number; children?: React.ReactNode;
}

const LabelCell = styled.div`
  display: grid;
  grid-row: span 2;
`;

const ReportBand = ({ label, height, outer = true, inset, boxed, line = true, stop, children }: BandProps) => (
  <>
    <LabelCell><BandLabel $outer={outer} $inset={inset} $boxed={boxed} $line={line}><span>{label}</span></BandLabel></LabelCell>
    <VRuler><VScale height={height} stop={stop} /></VRuler>
    <BandBody $height={height}>{children}</BandBody>
    <RuleLine />
  </>
);

/* ---------- field explorer ---------- */

const Explorer = styled.aside`
  display: flex;
  flex: 0 0 272px;
  flex-direction: column;
  padding-left: 5px;
`;

const ExplorerTitle = styled.div`
  display: flex;
  flex: none;
  align-items: center;
  justify-content: space-between;
  height: 27px;
  padding: 0 1px 0 3px;
  border: solid #a9c6ee;
  border-width: 0 0 1px 1px;
  background: #e6eef8;
  color: #15428b;
  h2 { margin: 0; font: 12px/16px ${UI}; }
`;

const ExplorerTools = styled.div`
  display: flex;
  flex: none;
  align-items: center;
  height: 25px;
  padding-top: 3px;
  margin-left: 2px;
  background: linear-gradient(#c3dcff 3px, #e9f3ff 3px, #b4d3ff);
`;

const Tree = styled.ul`
  flex: 1;
  margin-left: 1px;
  padding-left: 8px;
  border-left: 1px solid #e3eefb;
  background: #fff;
`;

const NodeRow = styled.div<{ $level: number; $fine?: boolean }>`
  display: flex;
  align-items: center;
  height: 16px;
  padding-left: ${(p) => p.$level * 19}px;
  font: ${(p) => (p.$fine ? `11px/16px Roboto, sans-serif` : `12px/16px ${SONG}`)};
  & > svg { flex: none; }
`;

const Toggle = styled.button<{ $open: boolean }>`
  flex: none;
  width: 9px;
  height: 9px;
  margin-right: 6px;
  border: 1px solid #8e8f94;
  background:
    linear-gradient(#3c5a9a, #3c5a9a) center / 5px 1px no-repeat,
    linear-gradient(#3c5a9a, #3c5a9a) center / ${(p) => (p.$open ? '0 0' : '1px 5px')} no-repeat,
    #f4f4f4;
`;

const NoToggle = styled.span`
  flex: none;
  width: 15px;
`;

const NodeText = styled.span<{ $selected?: boolean }>`
  margin-left: 3px;
  padding: 0 1px;
  ${(p) => p.$selected && css`background: #0078d7; color: #fff;`}
`;

const MarkedFields = styled.ul`
  position: relative;
  &::after {
    content: '';
    position: absolute;
    box-sizing: border-box;
    left: 52px;
    top: -1px;
    width: 97px;
    bottom: -4px;
    border: 2px solid #f00;
    pointer-events: none;
  }
`;

const Watermark = styled.div`
  position: absolute;
  right: 14px;
  bottom: 6px;
  font: 19px/28px "Liberation Sans", "Noto Sans CJK SC", sans-serif;
  color: #8f8f8f;
  text-shadow: 0 0 1px #fff, 1px 1px 0 #fff;
  white-space: nowrap;
`;

const Flame = styled.svg`
  position: absolute;
  right: 171px;
  bottom: 0;
`;

const menus = [['文件', 'F'], ['编辑', 'E'], ['视图', 'V'], ['插入', 'I'], ['格式', 'A'], ['数据库', 'D'], ['报表', 'R'], ['窗口', 'W'], ['帮助', 'H']];

const fields: [string, boolean][] = [
  ['labelNum', false], ['lineNum', false], ['qty', true], ['uom', true], ['spaceCode', false], ['grnNum', true],
  ['suppLabelNum', false], ['suppCode', false], ['suppName', true], ['weight', true], ['weightUnit', true],
  ['materialCode', true], ['materialName', true], ['imageURL', false],
];

const groups: [string, string, boolean][] = [
  ['fx', '公式字段', true], ['sql', 'SQL 表达式字段', false], ['param', '参数字段', false],
  ['running', '运行总计字段', false], ['group', '组名字段', false], ['special', '特殊字段', true],
];

export default function App() {
  return (
    <Shell>
      <Global />
      <TitleBar>
        <svg width="8" height="12" viewBox="0 0 8 12" aria-hidden="true"><path d="M1 11c4 0 5-3 5-8" fill="none" stroke="#4a8fe0" strokeWidth="3" /></svg>
        <span>Crystal Reports - [wmGrnDetail.rpt]</span>
      </TitleBar>
      <MenuBar>
        {menus.map(([name, key]) => <button key={key} type="button">{name}(<u>{key}</u>)</button>)}
      </MenuBar>
      <BandRow>
        <Band>
          <Grip />
          <Tools items={['new', 'open+', 'save', '|', 'print', 'preview', 'previewWin', 'export', '|', 'cut', 'copy', 'paste', 'brush', 'undo+', 'redo+', '|', 'sheet', 'form', 'publish', 'explorer', 'check', 'star', '|', 'find']} />
        </Band>
      </BandRow>
      <BandRow>
        <Band $tall>
          <Grip />
          <Combo aria-label="字体" $width={188} $height={18} />
          <Combo aria-label="字号" $width={62} $height={23} />
          <Tools items={['grow', 'shrink', '|', 'bold', 'italic', 'underline', '|', 'left', 'center', 'right', 'justify', '|', 'color+', 'border+', 'suppress', 'lockTable', 'lockSize', '|', 'dollar', 'comma', 'percent', 'decAdd', 'decSub']} />
        </Band>
      </BandRow>
      <BandRow>
        <Band>
          <Grip />
          <Tools items={['text', 'group', 'sigma', 'cross', 'cube', 'subreport', 'line', 'rect', 'picture', 'chart', 'map', 'flash']} />
        </Band>
        <Band>
          <Grip />
          <Tools items={['database', 'groupExpert', '|', 'sortGroup', 'sort', 'filter+', '|', 'section', 'fx', 'highlight', 'template', '|', 'olap', 'link', 'xml']} />
        </Band>
        <Band $end={12}>
          <Grip />
          <Tools items={['refresh', 'stop', 'first', 'prev']} />
          <PageBox aria-label="页码" readOnly />
          <Tools items={['next', 'last']} />
        </Band>
      </BandRow>
      <Main>
        <DocArea>
          <TabStrip>
            <Tab type="button" $slant $width={78}><TabInner>开始页</TabInner></Tab>
            <Tab type="button" $width={57}><TabInner>报表1</TabInner></Tab>
            <Tab type="button" $width={57}><TabInner>报表2</TabInner></Tab>
            <Tab type="button" $slant $active $width={155}>
              <TabInner>
                wmGrnDetail.rpt
                <svg width="7" height="7" viewBox="0 0 8 8" aria-hidden="true"><path d="M0 0l8 8M8 0L0 8" stroke="#4a6ea9" strokeWidth="1.500" /></svg>
              </TabInner>
            </Tab>
          </TabStrip>
          <ViewTabs>
            <ViewTab type="button" $active>设计</ViewTab>
            <ViewTab type="button">预览</ViewTab>
          </ViewTabs>
          <Canvas>
            <Glow width="480" height="160" aria-hidden="true">
              <path d="M0 0H470C330 22 190 58 110 90C70 104 30 118 0 128z" fill="#fff" opacity="0.2" />
              <path d="M0 154C80 100 210 50 340 20S440 4 480 0" fill="none" stroke="#fff" strokeWidth="2" opacity="0.15" />
            </Glow>
            <HRuler><HScale /></HRuler>
            <Sections>
              <ReportBand label="报表头" height={15} />
              <ReportBand label="页眉" height={28} inset stop={22}>
                <DateRow><Frame w={70} h={14} y={8}><DateLabel>打印日期</DateLabel></Frame></DateRow>
              </ReportBand>
              <ReportBand label="详细资料" height={449} inset boxed>
                <DetailBody>
                  <LabelCard />
                  <Frame w={567} h={24} x={8} y={8} snap><Caption>备注：建议用手持机打印小标识，简单易操作</Caption></Frame>
                </DetailBody>
              </ReportBand>
              <ReportBand label="报表尾" height={18} />
              <ReportBand label="页脚" height={55} outer={false} line={false} stop={35} />
            </Sections>
          </Canvas>
        </DocArea>
        <Explorer>
          <ExplorerTitle>
            <h2>字段资源管理器</h2>
            <svg width="9" height="9" viewBox="0 0 9 9" aria-hidden="true"><path d="M2.500 5V1.500h4V5M5.500 1.500V5M0 5.500h8M4.500 6v3" fill="none" stroke="#15428b" /></svg>
          </ExplorerTitle>
          <ExplorerTools>
            <Tools items={['insertField', 'browse', '|', 'newField', 'edit', 'duplicate', 'history', 'remove']} />
          </ExplorerTools>
          <Tree>
            <li>
              <NodeRow $level={0}><Toggle type="button" aria-label="折叠" $open /><Icon name="database" /><NodeText $selected>数据库字段</NodeText></NodeRow>
              <NodeRow $level={1} $fine><Toggle type="button" aria-label="折叠" $open /><Icon name="tableIcon" /><NodeText>wmGrnDetail_txt</NodeText></NodeRow>
              <MarkedFields>
                {fields.map(([name, used]) => (
                  <li key={name}>
                    <NodeRow $level={2} $fine><NoToggle /><Icon name={used ? 'fieldUsed' : 'field'} /><NodeText>{name}</NodeText></NodeRow>
                  </li>
                ))}
              </MarkedFields>
            </li>
            {groups.map(([icon, name, closed]) => (
              <li key={name}>
                <NodeRow $level={0}>
                  {closed ? <Toggle type="button" aria-label="展开" $open={false} /> : <NoToggle />}
                  <Icon name={icon} /><NodeText>{name}</NodeText>
                </NodeRow>
              </li>
            ))}
          </Tree>
        </Explorer>
      </Main>
      <Watermark>CSDN @旧时往事如过眼云烟</Watermark>
      <Flame width="12" height="2" aria-hidden="true"><path d="M0 2l4-2h7l-1 2z" fill="#fc5531" /></Flame>
    </Shell>
  );
}
